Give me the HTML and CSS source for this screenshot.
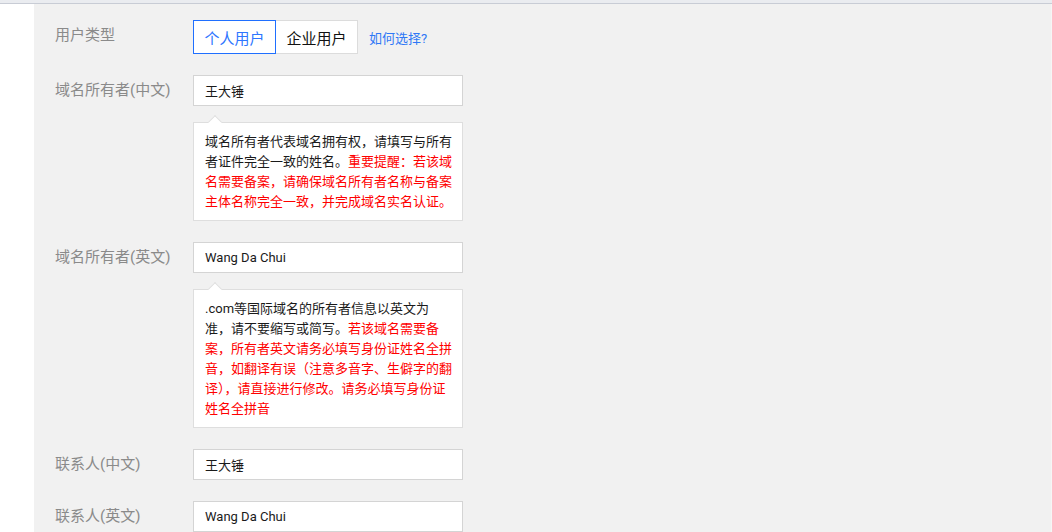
FILE: index.html
```html
<!DOCTYPE html>
<html lang="zh-CN">
<head>
<meta charset="utf-8">
<title>域名信息</title>
<link rel="stylesheet" href="styles.css">
</head>
<body>
<div class="topbar"></div>
<div class="main">
  <aside class="side"></aside>
  <section class="content">
    <form class="form">
      <div class="item">
        <label class="label">用户类型</label>
        <div class="control row">
          <div class="seg">
            <button type="button" class="seg-btn active">个人用户</button>
            <button type="button" class="seg-btn">企业用户</button>
          </div>
          <a class="link">如何选择?</a>
        </div>
      </div>
      <div class="item">
        <label class="label">域名所有者(中文)</label>
        <div class="control">
          <input class="input" value="王大锤">
          <div class="tip">域名所有者代表域名拥有权，请填写与所有<br>者证件完全一致的姓名。<span class="red">重要提醒：若该域<br>名需要备案，请确保域名所有者名称与备案<br>主体名称完全一致，并完成域名实名认证。</span></div>
        </div>
      </div>
      <div class="item">
        <label class="label">域名所有者(英文)</label>
        <div class="control">
          <input class="input" value="Wang Da Chui">
          <div class="tip">.com等国际域名的所有者信息以英文为<br>准，请不要缩写或简写。<span class="red">若该域名需要备<br>案，所有者英文请务必填写身份证姓名全拼<br>音，如翻译有误（注意多音字、生僻字的翻<br>译），请直接进行修改。请务必填写身份证<br>姓名全拼音</span></div>
        </div>
      </div>
      <div class="item">
        <label class="label">联系人(中文)</label>
        <div class="control">
          <input class="input" value="王大锤">
        </div>
      </div>
      <div class="item">
        <label class="label">联系人(英文)</label>
        <div class="control">
          <input class="input" value="Wang Da Chui">
        </div>
      </div>
    </form>
  </section>
</div>
</body>
</html>
```

FILE: styles.css
```css
* { box-sizing: border-box; }
html, body {
  margin: 0;
  padding: 0;
  height: 532px;
  overflow: hidden;
  font-family: Roboto, "Noto Sans CJK SC", sans-serif;
  background: #ffffff;
}
.topbar {
  height: 4px;
  background: #eaecf0;
  border-bottom: 1px solid #c8ccd5;
}
.main {
  display: flex;
  height: 528px;
}
.side {
  width: 34px;
  flex: none;
  background: #ffffff;
}
.content {
  flex: 1;
  background: #f1f1f1;
  padding: 16px 0 0 21px;
  border-right: 1px solid #f6f6f6;
}
.item {
  display: flex;
  align-items: flex-start;
  margin-bottom: 21px;
}
.label {
  width: 138px;
  flex: none;
  font-family: Roboto, "Noto Sans CJK SC", sans-serif;
  font-size: 15px;
  line-height: 30px;
  color: #8a8a8a;
}
.control {
  width: 270px;
  flex: none;
}
.row {
  display: flex;
  align-items: center;
  width: auto;
}
.seg {
  display: flex;
}
.seg-btn {
  position: relative;
  width: 83px;
  height: 34px;
  border: 1px solid #dcdcdc;
  background: #ffffff;
  font-family: "Noto Sans CJK SC", sans-serif;
  font-size: 15px;
  color: #111111;
  padding: 0;
  margin: 0;
}
.seg-btn + .seg-btn { margin-left: -1px; }
.seg-btn.active {
  border-color: #1f6fff;
  color: #2e76ff;
  z-index: 1;
}
.link {
  margin-left: 11px;
  font-size: 13px;
  color: #2f78f6;
  font-family: Roboto, "Noto Sans CJK SC", sans-serif;
}
.input {
  display: block;
  width: 270px;
  height: 31px;
  border: 1px solid #d4d4d4;
  background: #ffffff;
  padding: 0 11px;
  font-family: Roboto, "Noto Sans CJK SC", sans-serif;
  font-size: 13px;
  color: #1a1a1a;
  margin: 0;
  outline: none;
}
.tip {
  position: relative;
  margin-top: 16px;
  background: #ffffff;
  border: 1px solid #dedede;
  padding: 9px 4px 8px 11px;
  font-size: 13px;
  line-height: 20px;
  color: #1a1a1a;
  white-space: nowrap;
}
.tip::before {
  content: "";
  position: absolute;
  top: -6px;
  left: 16px;
  width: 9px;
  height: 9px;
  background: #ffffff;
  border-top: 1px solid #dedede;
  border-left: 1px solid #dedede;
  transform: rotate(45deg);
}
.red { color: #ff0000; }
```
